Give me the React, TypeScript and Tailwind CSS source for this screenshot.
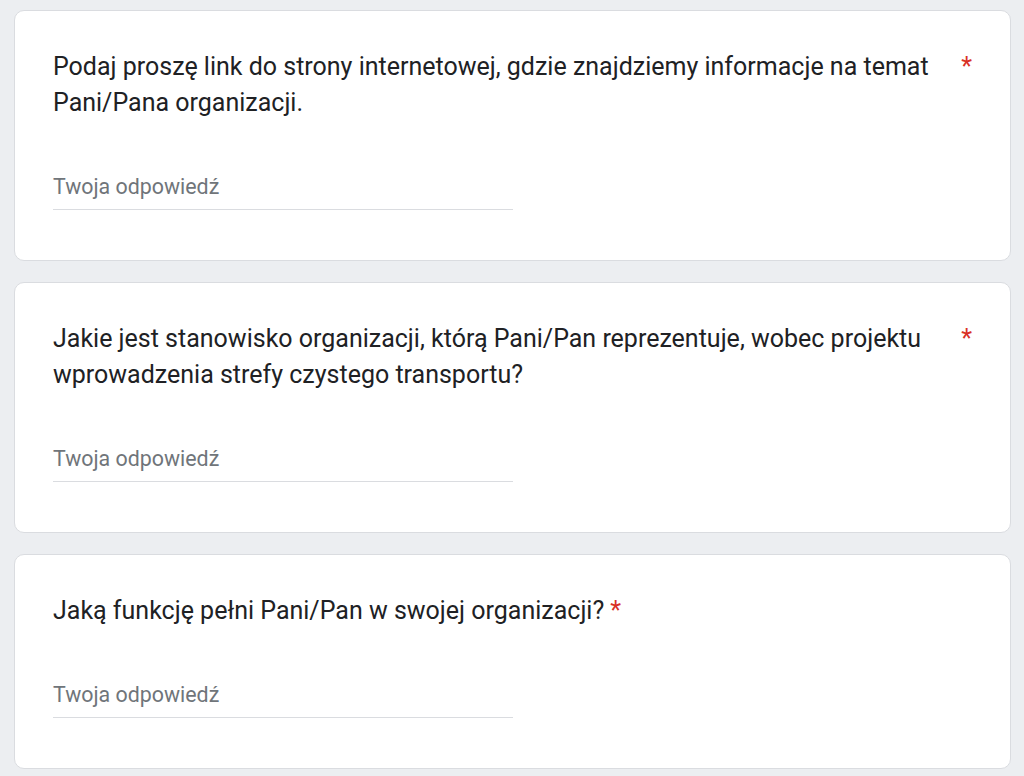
import React from "react";

function Card({ title, wrap }: { title: string; wrap: boolean }) {
  return (
    <div className="bg-white border border-[#dadce0] rounded-[10px] pt-[38px] pb-[50px] px-[38px]">
      {wrap ? (
        <div className="flex items-start gap-[16px]">
          <div className="flex-1 text-[25px] leading-[36px] text-[#202124]">{title}</div>
          <span className="text-[25px] leading-[36px] text-[#d93025]">*</span>
        </div>
      ) : (
        <div className="text-[25px] leading-[36px] text-[#202124]">
          {title}
          <span className="text-[#d93025] pl-[6px]">*</span>
        </div>
      )}
      <div className="mt-[52px] w-[460px] border-b border-[#dadce0] pb-[8px]">
        <div className="text-[21.4px] leading-[28px] text-[#70757a]">Twoja odpowiedź</div>
      </div>
    </div>
  );
}

export default function App() {
  return (
    <div
      className="w-[1024px] h-[776px] bg-[#eceef1] pt-[10px] pl-[14px] pr-[13px] flex flex-col gap-[21px] overflow-hidden"
      style={{ fontFamily: "Roboto, 'Noto Sans', sans-serif" }}
    >
      <Card
        wrap
        title="Podaj proszę link do strony internetowej, gdzie znajdziemy informacje na temat Pani/Pana organizacji."
      />
      <Card
        wrap
        title="Jakie jest stanowisko organizacji, którą Pani/Pan reprezentuje, wobec projektu wprowadzenia strefy czystego transportu?"
      />
      <Card wrap={false} title="Jaką funkcję pełni Pani/Pan w swojej organizacji?" />
    </div>
  );
}
